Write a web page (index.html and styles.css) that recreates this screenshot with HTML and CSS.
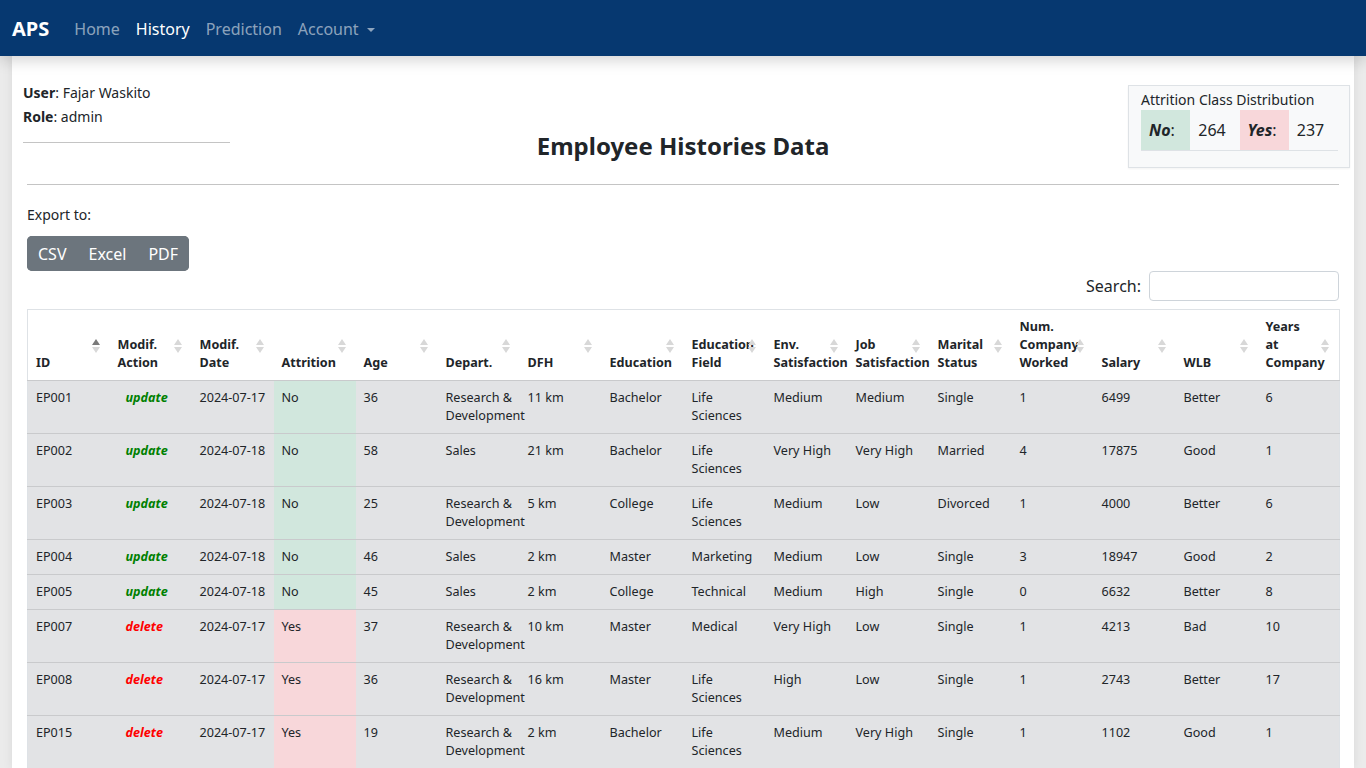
FILE: index.html
```html
<!DOCTYPE html>
<html lang="en">
<head>
<meta charset="utf-8">
<title>APS - History</title>
<link rel="stylesheet" href="styles.css">
</head>
<body>
<nav class="navbar">
  <a class="brand" href="#">APS</a>
  <a class="nav-link" href="#">Home</a>
  <a class="nav-link active" href="#">History</a>
  <a class="nav-link" href="#">Prediction</a>
  <a class="nav-link dropdown" href="#">Account <span class="caret"></span></a>
</nav>

<main class="container">
  <section class="page-head">
    <div class="user-info">
      <div><b>User</b>: Fajar Waskito</div>
      <div><b>Role</b>: admin</div>
      <hr class="user-rule">
    </div>
    <h1 class="title">Employee Histories Data</h1>
    <div class="dist-wrap">
      <div class="dist-box">
        <div class="dist-title">Attrition Class Distribution</div>
        <table class="dist-table">
          <tr>
            <td class="bg-no"><b><i>No</i></b>:</td>
            <td>264</td>
            <td class="bg-yes"><b><i>Yes</i></b>:</td>
            <td>237</td>
          </tr>
        </table>
      </div>
    </div>
  </section>

  <hr class="main-rule">

  <section class="data-section">
    <div class="export-label">Export to:</div>
    <div class="btn-group">
      <button class="btn">CSV</button>
      <button class="btn">Excel</button>
      <button class="btn">PDF</button>
    </div>
    <div class="search-row">
      <label>Search:</label>
      <input type="search" class="search-input">
    </div>

    <table class="data-table">
      <thead>
        <tr>
          <th class="sort-asc">ID</th>
          <th>Modif. Action</th>
          <th>Modif. Date</th>
          <th>Attrition</th>
          <th>Age</th>
          <th>Depart.</th>
          <th>DFH</th>
          <th>Education</th>
          <th>Education Field</th>
          <th>Env. Satisfaction</th>
          <th>Job Satisfaction</th>
          <th>Marital Status</th>
          <th>Num. Company Worked</th>
          <th>Salary</th>
          <th>WLB</th>
          <th>Years at Company</th>
        </tr>
      </thead>
      <tbody>
        <tr>
          <td>EP001</td><td class="act-update">update</td><td>2024-07-17</td><td class="bg-no">No</td><td>36</td>
          <td>Research&nbsp;&amp; Development</td><td>11 km</td><td>Bachelor</td><td>Life Sciences</td><td>Medium</td>
          <td>Medium</td><td>Single</td><td>1</td><td>6499</td><td>Better</td><td>6</td>
        </tr>
        <tr>
          <td>EP002</td><td class="act-update">update</td><td>2024-07-18</td><td class="bg-no">No</td><td>58</td>
          <td>Sales</td><td>21 km</td><td>Bachelor</td><td>Life Sciences</td><td>Very High</td>
          <td>Very High</td><td>Married</td><td>4</td><td>17875</td><td>Good</td><td>1</td>
        </tr>
        <tr>
          <td>EP003</td><td class="act-update">update</td><td>2024-07-18</td><td class="bg-no">No</td><td>25</td>
          <td>Research&nbsp;&amp; Development</td><td>5 km</td><td>College</td><td>Life Sciences</td><td>Medium</td>
          <td>Low</td><td>Divorced</td><td>1</td><td>4000</td><td>Better</td><td>6</td>
        </tr>
        <tr>
          <td>EP004</td><td class="act-update">update</td><td>2024-07-18</td><td class="bg-no">No</td><td>46</td>
          <td>Sales</td><td>2 km</td><td>Master</td><td>Marketing</td><td>Medium</td>
          <td>Low</td><td>Single</td><td>3</td><td>18947</td><td>Good</td><td>2</td>
        </tr>
        <tr>
          <td>EP005</td><td class="act-update">update</td><td>2024-07-18</td><td class="bg-no">No</td><td>45</td>
          <td>Sales</td><td>2 km</td><td>College</td><td>Technical</td><td>Medium</td>
          <td>High</td><td>Single</td><td>0</td><td>6632</td><td>Better</td><td>8</td>
        </tr>
        <tr>
          <td>EP007</td><td class="act-delete">delete</td><td>2024-07-17</td><td class="bg-yes">Yes</td><td>37</td>
          <td>Research&nbsp;&amp; Development</td><td>10 km</td><td>Master</td><td>Medical</td><td>Very High</td>
          <td>Low</td><td>Single</td><td>1</td><td>4213</td><td>Bad</td><td>10</td>
        </tr>
        <tr>
          <td>EP008</td><td class="act-delete">delete</td><td>2024-07-17</td><td class="bg-yes">Yes</td><td>36</td>
          <td>Research&nbsp;&amp; Development</td><td>16 km</td><td>Master</td><td>Life Sciences</td><td>High</td>
          <td>Low</td><td>Single</td><td>1</td><td>2743</td><td>Better</td><td>17</td>
        </tr>
        <tr>
          <td>EP015</td><td class="act-delete">delete</td><td>2024-07-17</td><td class="bg-yes">Yes</td><td>19</td>
          <td>Research&nbsp;&amp; Development</td><td>2 km</td><td>Bachelor</td><td>Life Sciences</td><td>Medium</td>
          <td>Very High</td><td>Single</td><td>1</td><td>1102</td><td>Good</td><td>1</td>
        </tr>
      </tbody>
    </table>
  </section>
</main>
</body>
</html>
```

FILE: styles.css
```css
* { box-sizing: border-box; }

html, body {
  margin: 0;
  padding: 0;
}

body {
  background: #ebebeb;
  font-family: "Noto Sans", "Open Sans", sans-serif;
  color: #212529;
  font-size: 16px;
  line-height: 1.5;
}

/* Navbar */
.navbar {
  position: relative;
  z-index: 2;
  height: 56px;
  background: #063870;
  display: flex;
  align-items: center;
  padding: 2px 12px 0 12px;
  box-shadow: 0 4px 14px rgba(0, 0, 0, 0.18);
}

.brand {
  color: #fff;
  font-weight: 700;
  font-size: 20px;
  text-decoration: none;
  margin-right: 17px;
}

.nav-link {
  color: rgba(255, 255, 255, 0.55);
  text-decoration: none;
  font-size: 16px;
  padding: 8px 8px;
}

.nav-link.active {
  color: #fff;
}

.caret {
  display: inline-block;
  width: 0;
  height: 0;
  margin-left: 4px;
  vertical-align: 3px;
  border-left: 4px solid transparent;
  border-right: 4px solid transparent;
  border-top: 4px solid rgba(255, 255, 255, 0.55);
}

/* Container */
.container {
  margin: 0 12px;
  background: #fff;
  padding: 0 15px 0 15px;
  min-height: 712px;
  box-shadow: 0 0 10px rgba(0, 0, 0, 0.08);
}

.page-head {
  display: grid;
  grid-template-columns: 1fr auto 1fr;
  padding-top: 25px;
  margin: 0 -11px 0 -4px;
}

.user-info {
  font-size: 14px;
  line-height: 24px;
}

.user-rule {
  width: 207px;
  margin: 13px 0 0 0;
  border: 0;
  border-top: 1px solid #c4c4c4;
}

.title {
  margin: 0 7px 0 0;
  align-self: start;
  padding-top: 48px;
  font-size: 24px;
  line-height: 34px;
  font-weight: 700;
}

.dist-wrap {
  display: flex;
  justify-content: flex-end;
  padding-top: 4px;
}

.dist-box {
  width: 222px;
  height: 83px;
  background: #f8f9fa;
  border: 1px solid #dee2e6;
  padding: 4px 12px 0 12px;
  box-shadow: 0 1px 2px rgba(0, 0, 0, 0.05);
}

.dist-title {
  font-size: 14px;
  line-height: 20px;
}

.dist-table {
  border-collapse: collapse;
  width: 197px;
}

.dist-table td {
  height: 40px;
  padding: 0 8px;
  font-size: 16px;
  border-bottom: 1px solid #dee2e6;
  width: 49px;
}

.main-rule {
  margin: 16px 0 0 0;
  border: 0;
  border-top: 1px solid #c4c4c4;
}

/* data section */
.export-label {
  margin-top: 19px;
  font-size: 14px;
  line-height: 22px;
}

.btn-group {
  display: inline-flex;
  margin-top: 10px;
  background: #6c757d;
  border-radius: 5px;
  overflow: hidden;
}

.btn {
  border: 0;
  background: #6c757d;
  color: #fff;
  font-family: inherit;
  font-size: 16px;
  line-height: 24px;
  padding: 6px 11px 5px 11px;
}

.search-row {
  display: flex;
  justify-content: flex-end;
  align-items: center;
  gap: 8px;
  margin-top: 0px;
}

.search-row label {
  font-size: 16px;
}

.search-input {
  width: 190px;
  height: 30px;
  border: 1px solid #ced4da;
  border-radius: 4px;
  background: #fff;
}

/* data table */
.data-table {
  margin-top: 8px;
  width: 1313px;
  table-layout: fixed;
  border-collapse: collapse;
  border: 1px solid #dee2e6;
  font-size: 12.6px;
  line-height: 18px;
}

.data-table th {
  position: relative;
  text-align: left;
  vertical-align: bottom;
  font-weight: 700;
  padding: 8px 30px 8px 8px;
  background: #fff;
}

.data-table th::before,
.data-table th::after {
  content: "";
  position: absolute;
  right: 10px;
  width: 0;
  height: 0;
  border-left: 4px solid transparent;
  border-right: 4px solid transparent;
}

.data-table th::before {
  top: 29px;
  border-bottom: 6px solid #d8d8d8;
}

.data-table th::after {
  top: 37px;
  border-top: 6px solid #d8d8d8;
}

.data-table th.sort-asc::before {
  border-bottom-color: #7a7a7a;
}

.data-table td {
  vertical-align: top;
  padding: 8px;
  background: #e2e3e5;
  border-top: 1px solid #c9cacc;
}

.data-table td:nth-child(3) {
  white-space: nowrap;
}

.data-table td.bg-no,
.dist-table td.bg-no {
  background: #d1e7dd;
}

.data-table td.bg-yes,
.dist-table td.bg-yes {
  background: #f8d7da;
}

.data-table td.act-update,
.data-table td.act-delete {
  font-weight: 700;
  font-style: italic;
  padding-left: 16px;
}

.act-update { color: #008000; }
.act-delete { color: #ff0000; }
```
